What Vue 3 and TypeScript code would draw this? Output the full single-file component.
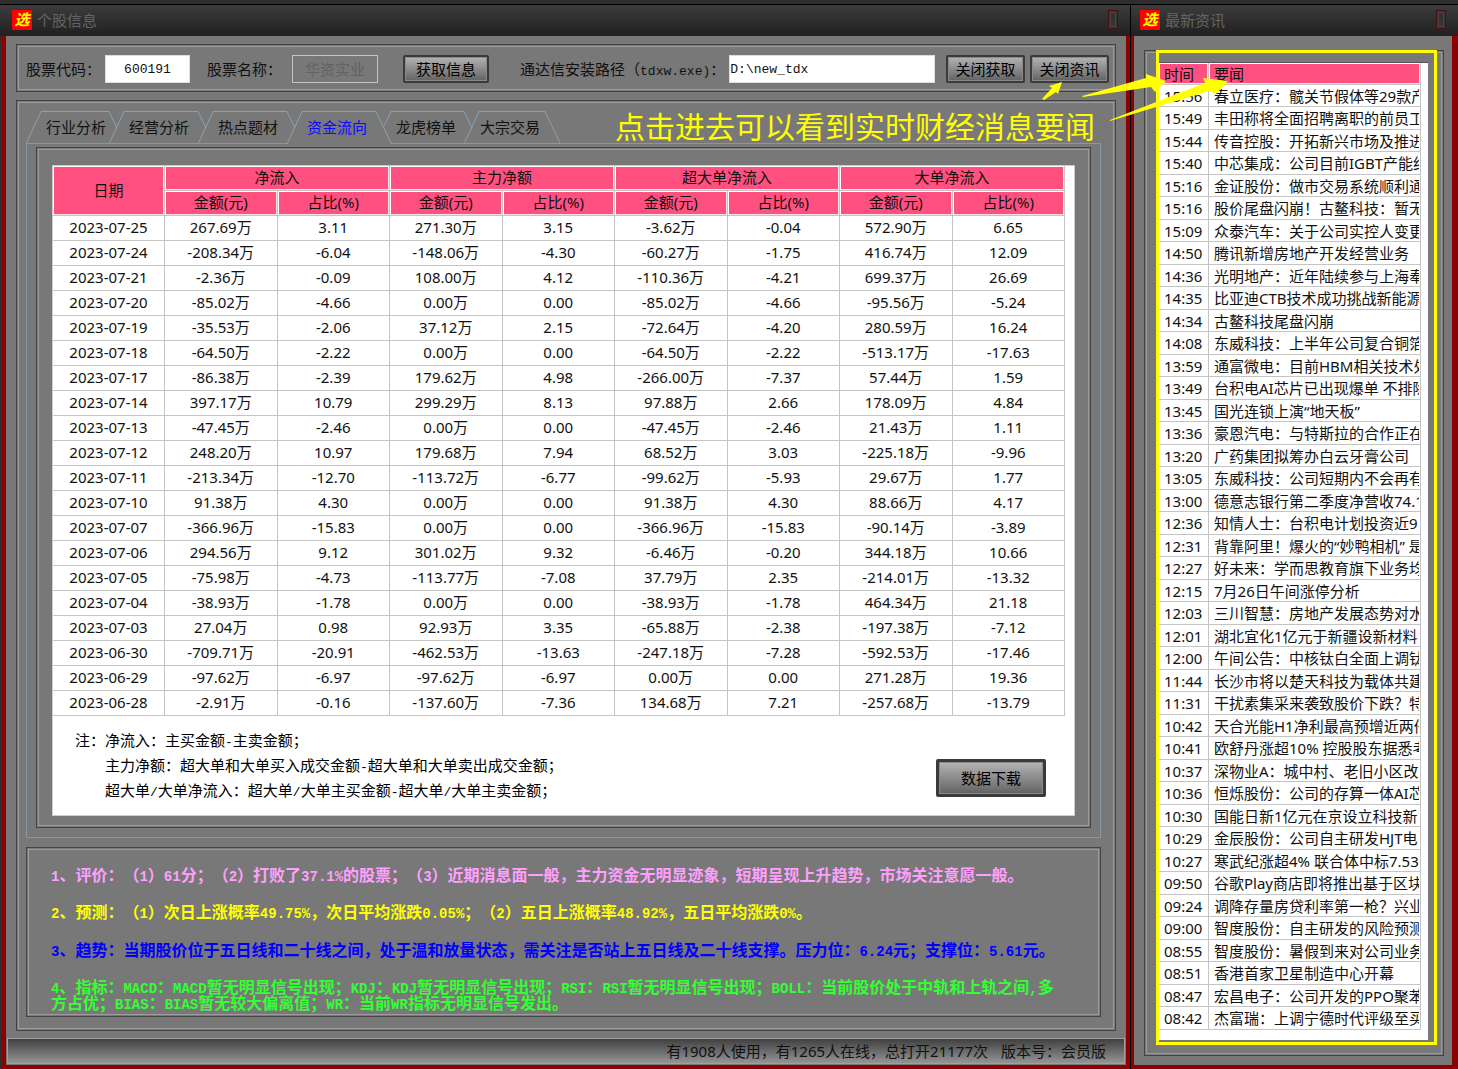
<script setup lang="ts">
import { ref } from 'vue'

interface Tab {
  label: string
  width: number
}

interface Comment {
  tone: string
  text: string
}

const tabs: Tab[] = [
  { label: '行业分析', width: 83 },
  { label: '经营分析', width: 89 },
  { label: '热点题材', width: 89 },
  { label: '资金流向', width: 89 },
  { label: '龙虎榜单', width: 88 },
  { label: '大宗交易', width: 81 },
]
const active = ref(3)
const code = ref('600191')
const stockName = ref('华资实业')
const path = ref('D:\\new_tdx')

// Outline of one slanted tab; neighbours of the selected tab are cut where it covers them.
function tabShape(i: number): string {
  const w = tabs[i].width
  const open = i === active.value || i === tabs.length - 1
  const start = i === active.value + 1 ? 'M8 15 L15 0.5' : 'M0.5 32 L15 0.5'
  return `${start} H${w} L${open ? w + 15 : w + 8} ${open ? 32 : 17}`
}

const groups = ['净流入', '主力净额', '超大单净流入', '大单净流入']

const flows: string[][] = `
2023-07-25 267.69万 3.11 271.30万 3.15 -3.62万 -0.04 572.90万 6.65
2023-07-24 -208.34万 -6.04 -148.06万 -4.30 -60.27万 -1.75 416.74万 12.09
2023-07-21 -2.36万 -0.09 108.00万 4.12 -110.36万 -4.21 699.37万 26.69
2023-07-20 -85.02万 -4.66 0.00万 0.00 -85.02万 -4.66 -95.56万 -5.24
2023-07-19 -35.53万 -2.06 37.12万 2.15 -72.64万 -4.20 280.59万 16.24
2023-07-18 -64.50万 -2.22 0.00万 0.00 -64.50万 -2.22 -513.17万 -17.63
2023-07-17 -86.38万 -2.39 179.62万 4.98 -266.00万 -7.37 57.44万 1.59
2023-07-14 397.17万 10.79 299.29万 8.13 97.88万 2.66 178.09万 4.84
2023-07-13 -47.45万 -2.46 0.00万 0.00 -47.45万 -2.46 21.43万 1.11
2023-07-12 248.20万 10.97 179.68万 7.94 68.52万 3.03 -225.18万 -9.96
2023-07-11 -213.34万 -12.70 -113.72万 -6.77 -99.62万 -5.93 29.67万 1.77
2023-07-10 91.38万 4.30 0.00万 0.00 91.38万 4.30 88.66万 4.17
2023-07-07 -366.96万 -15.83 0.00万 0.00 -366.96万 -15.83 -90.14万 -3.89
2023-07-06 294.56万 9.12 301.02万 9.32 -6.46万 -0.20 344.18万 10.66
2023-07-05 -75.98万 -4.73 -113.77万 -7.08 37.79万 2.35 -214.01万 -13.32
2023-07-04 -38.93万 -1.78 0.00万 0.00 -38.93万 -1.78 464.34万 21.18
2023-07-03 27.04万 0.98 92.93万 3.35 -65.88万 -2.38 -197.38万 -7.12
2023-06-30 -709.71万 -20.91 -462.53万 -13.63 -247.18万 -7.28 -592.53万 -17.46
2023-06-29 -97.62万 -6.97 -97.62万 -6.97 0.00万 0.00 271.28万 19.36
2023-06-28 -2.91万 -0.16 -137.60万 -7.36 134.68万 7.21 -257.68万 -13.79
`.trim().split('\n').map((line) => line.split(' '))

const notes = [
  '净流入：主买金额-主卖金额；',
  '主力净额：超大单和大单买入成交金额-超大单和大单卖出成交金额；',
  '超大单/大单净流入：超大单/大单主买金额-超大单/大单主卖金额；',
]

const comments: Comment[] = [
  { tone: 'pink', text: '1、评价：（1）61分；（2）打败了37.1%的股票；（3）近期消息面一般，主力资金无明显迹象，短期呈现上升趋势，市场关注意愿一般。' },
  { tone: 'yellow', text: '2、预测：（1）次日上涨概率49.75%，次日平均涨跌0.05%；（2）五日上涨概率48.92%，五日平均涨跌0%。' },
  { tone: 'blue', text: '3、趋势：当期股价位于五日线和二十线之间，处于温和放量状态，需关注是否站上五日线及二十线支撑。压力位：6.24元；支撑位：5.61元。' },
  { tone: 'green', text: '4、指标：MACD：MACD暂无明显信号出现；KDJ：KDJ暂无明显信号出现；RSI：RSI暂无明显信号出现；BOLL：当前股价处于中轨和上轨之间,多\n方占优；BIAS：BIAS暂无较大偏离值；WR：当前WR指标无明显信号发出。' },
]

// Splits a line into runs so that half-width characters get their own size.
function runs(text: string): { latin: boolean; s: string }[] {
  return (text.match(/[!-~]+|[^!-~]+/g) ?? []).map((s) => ({ latin: /^[!-~]/.test(s), s }))
}

const news: string[][] = `
15:56|春立医疗：髋关节假体等29款产品
15:49|丰田称将全面招聘离职的前员工
15:44|传音控股：开拓新兴市场及推进
15:40|中芯集成：公司目前IGBT产能约
15:16|金证股份：做市交易系统顺利通
15:16|股价尾盘闪崩！古鳌科技：暂无
15:09|众泰汽车：关于公司实控人变更
14:50|腾讯新增房地产开发经营业务
14:36|光明地产：近年陆续参与上海奉
14:35|比亚迪CTB技术成功挑战新能源
14:34|古鳌科技尾盘闪崩
14:08|东威科技：上半年公司复合铜箔
13:59|通富微电：目前HBM相关技术处
13:49|台积电AI芯片已出现爆单 不排除
13:45|国光连锁上演“地天板”
13:36|豪恩汽电：与特斯拉的合作正在
13:20|广药集团拟筹办白云牙膏公司
13:05|东威科技：公司短期内不会再有
13:00|德意志银行第二季度净营收74.1
12:36|知情人士：台积电计划投资近9
12:31|背靠阿里！爆火的“妙鸭相机” 是
12:27|好未来：学而思教育旗下业务均
12:15|7月26日午间涨停分析
12:03|三川智慧：房地产发展态势对水
12:01|湖北宜化1亿元于新疆设新材料
12:00|午间公告：中核钛白全面上调钛
11:44|长沙市将以楚天科技为载体共建
11:31|干扰素集采来袭致股价下跌？特
10:42|天合光能H1净利最高预增近两倍
10:41|欧舒丹涨超10% 控股股东据悉考
10:37|深物业A：城中村、老旧小区改
10:36|恒烁股份：公司的存算一体AI芯
10:30|国能日新1亿元在京设立科技新
10:29|金辰股份：公司自主研发HJT电
10:27|寒武纪涨超4% 联合体中标7.53
09:50|谷歌Play商店即将推出基于区块
09:24|调降存量房贷利率第一枪？兴业
09:00|智度股份：自主研发的风险预测
08:55|智度股份：暑假到来对公司业务
08:51|香港首家卫星制造中心开幕
08:47|宏昌电子：公司开发的PPO聚苯
08:42|杰富瑞：上调宁德时代评级至买
`.trim().split('\n').map((line) => line.split('|'))
</script>

<template>
  <div class="desk">
    <section class="window main">
      <header class="title">
        <span class="logo">选</span>
        <h1>个股信息</h1>
        <button class="close" type="button" aria-label="关闭">
          <svg width="10" height="19" viewBox="0 0 10 19"><rect x="0.5" y="0.5" width="9" height="18" fill="#333" stroke="#4a1212" /><rect x="2.5" y="2.5" width="5" height="14" fill="none" stroke="#4c4242" /></svg>
        </button>
      </header>
      <div class="body">
        <form class="groove toolbar" @submit.prevent>
          <label for="code">股票代码：</label>
          <input id="code" v-model="code" class="code" type="text" />
          <label for="name" class="name-label">股票名称：</label>
          <input id="name" v-model="stockName" class="name" type="text" disabled />
          <button class="btn fetch" type="button">获取信息</button>
          <label for="path" class="path-label">通达信安装路径（<span class="latin">tdxw.exe)</span>：</label>
          <input id="path" v-model="path" class="path" type="text" />
          <button class="btn" type="button">关闭获取</button>
          <button class="btn last" type="button">关闭资讯</button>
        </form>

        <div class="groove content">
          <nav class="tabs" role="tablist">
            <button
              v-for="(tab, i) in tabs"
              :key="tab.label"
              class="tab"
              :class="{ active: i === active }"
              type="button"
              role="tab"
              :aria-selected="i === active"
              :style="{ width: tab.width + 'px' }"
              @click="active = i"
            >
              <svg class="shape" :width="tab.width + 16" height="33"><path :d="tabShape(i)" fill="none" stroke="#8aa2b0" /></svg>
              <span>{{ tab.label }}</span>
            </button>
          </nav>
          <div class="page">
            <div class="groove frame">
              <div class="sheet">
                <table class="flows">
                  <colgroup>
                    <col class="date-col" />
                    <col v-for="n in 8" :key="n" />
                  </colgroup>
                  <thead>
                    <tr>
                      <th rowspan="2" scope="col">日期</th>
                      <th v-for="g in groups" :key="g" colspan="2" scope="colgroup">{{ g }}</th>
                    </tr>
                    <tr>
                      <template v-for="g in groups" :key="g">
                        <th scope="col">金额(元)</th>
                        <th scope="col">占比(%)</th>
                      </template>
                    </tr>
                  </thead>
                  <tbody>
                    <tr v-for="row in flows" :key="row[0]">
                      <td v-for="(cell, c) in row" :key="c">{{ cell }}</td>
                    </tr>
                  </tbody>
                </table>
                <div class="foot">
                  <div class="notes">
                    <span>注：</span>
                    <div>
                      <p v-for="note in notes" :key="note"><span v-for="(r, k) in runs(note)" :key="k" :class="{ latin: r.latin }">{{ r.s }}</span></p>
                    </div>
                  </div>
                  <button class="btn download" type="button">数据下载</button>
                </div>
              </div>
            </div>
          </div>
          <div class="groove comments">
            <p v-for="c in comments" :key="c.tone" :class="c.tone"><span v-for="(r, k) in runs(c.text)" :key="k" :class="{ latin: r.latin }">{{ r.s }}</span></p>
          </div>
        </div>
        <footer class="status">
          <span>有1908人使用，有1265人在线，总打开21177次</span>
          <span>版本号：会员版</span>
        </footer>
      </div>
    </section>

    <section class="window side">
      <header class="title">
        <span class="logo">选</span>
        <h1>最新资讯</h1>
        <button class="close" type="button" aria-label="关闭">
          <svg width="10" height="19" viewBox="0 0 10 19"><rect x="0.5" y="0.5" width="9" height="18" fill="#333" stroke="#4a1212" /><rect x="2.5" y="2.5" width="5" height="14" fill="none" stroke="#4c4242" /></svg>
        </button>
      </header>
      <div class="body">
        <div class="groove feed">
          <div class="paper">
            <table class="news">
              <colgroup>
                <col class="time-col" />
                <col />
              </colgroup>
              <thead>
                <tr>
                  <th scope="col">时间</th>
                  <th scope="col">要闻</th>
                </tr>
              </thead>
              <tbody>
                <tr v-for="(n, i) in news" :key="i">
                  <td>{{ n[0] }}</td>
                  <td><div class="headline">{{ n[1] }}</div></td>
                </tr>
              </tbody>
            </table>
          </div>
          <div class="highlight"></div>
        </div>
      </div>
    </section>

    <div class="callout">点击进去可以看到实时财经消息要闻</div>
    <svg class="arrows" width="190" height="44" viewBox="0 0 190 44" fill="#ff0">
      <path d="M2 19 L12 8 L9 6 L22 2 L18 14 L16 12 L4 20 Z" />
      <path d="M42 16 L106 -2 L106 -6 L126 1 L115 12 L111 7 L43 17 Z" />
      <path d="M70 40 L165 3 L163 -2 L188 1 L176 14 L169 11 L70 41 Z" />
    </svg>
  </div>
</template>

<style>
html,
body {
  background: #2b2b2b;
}
</style>

<style scoped>
* {
  box-sizing: border-box;
}

.desk {
  position: relative;
  display: flex;
  min-height: 100vh;
  padding-top: 4px;
  background: #2e2e2e;
  color: #111;
  font: 15px/20px "Noto Sans", "Noto Sans CJK SC", sans-serif;
  text-spacing-trim: space-all;
}

h1,
p {
  margin: 0;
}

button,
input {
  margin: 0;
  padding: 0;
  font: inherit;
  color: inherit;
}

.window {
  display: flex;
  flex-direction: column;
  border-top: 1px solid #000;
}

.main {
  flex: 1;
  min-width: 0;
  border-right: 1px solid #000;
}

.side {
  flex: none;
  width: 327px;
}

.title {
  display: flex;
  align-items: center;
  height: 31px;
  padding: 0 12px 2px;
  background: linear-gradient(#3c3c3c, #202020);
}

.side .title {
  padding-left: 9px;
}

.logo {
  width: 20px;
  height: 20px;
  background: #f00;
  color: #ff0;
  font-size: 15px;
  font-weight: 700;
  font-style: italic;
  line-height: 19px;
  text-align: center;
}

.title h1 {
  flex: 1;
  margin-left: 5px;
  color: #646464;
  font-size: 15px;
  font-weight: 400;
}

.close {
  width: 10px;
  height: 19px;
  border: 0;
  background: none;
}

.close svg {
  display: block;
}

.body {
  flex: 1;
  display: flex;
  flex-direction: column;
  border: 4px solid #8c0000;
  border-top: 0;
  background: #787878;
}

.main .body {
  margin-left: 2px;
  padding: 8px 10px 1px;
}

.side .body {
  margin-right: 1px;
  border-left-width: 3px;
  border-right-width: 5px;
  padding: 14px 8px 9px 10px;
}

.groove {
  border: 1px solid #444;
  box-shadow: inset 0 0 0 1px #787878, inset 0 0 0 2px #9c9c9c;
}

.latin {
  font-family: "Liberation Mono", monospace;
  font-size: 13px;
  line-height: 1px;
}

.toolbar {
  display: flex;
  align-items: center;
  height: 48px;
  padding: 2px 6px 0 9px;
  white-space: nowrap;
}

.toolbar input {
  height: 28px;
  border: 1px solid #ddd;
  border-radius: 0;
  background: #fff;
  font: 13px "Liberation Mono", "Noto Sans CJK SC", monospace;
}

.toolbar .code {
  width: 85px;
  margin-left: 4px;
  text-align: center;
}

.name-label {
  margin-left: 17px;
}

.toolbar .name {
  width: 86px;
  margin-left: 10px;
  border-color: #c4c4c4;
  background: #787878;
  color: #626262;
  font-size: 15px;
  text-align: center;
}

.btn {
  flex: none;
  width: 79px;
  height: 28px;
  border: 2px solid #3a3a3a;
  border-radius: 2px;
  background: linear-gradient(#b4b4b4, #626262);
  box-shadow: inset 0 0 0 1px #8a8a8a;
  color: #000;
  line-height: 22px;
  white-space: nowrap;
}

.fetch {
  width: 86px;
  margin-left: 25px;
}

.path-label {
  margin-left: 31px;
}

.toolbar .path {
  flex: 1;
  min-width: 0;
  margin: 0 11px 0 4px;
}

.last {
  margin-left: 5px;
}

.content {
  flex: 1;
  display: flex;
  flex-direction: column;
  margin-top: 8px;
  padding: 10px 14px 13px 9px;
}

.tabs {
  display: flex;
  height: 32px;
}

.tab {
  position: relative;
  flex: none;
  border: 0;
  padding-left: 20px;
  background: none;
  color: #111;
  text-align: left;
  white-space: nowrap;
}

.tab.active {
  color: #0a0aff;
  z-index: 1;
}

.tab.active::after {
  content: "";
  position: absolute;
  left: 1px;
  right: -14px;
  bottom: -1px;
  height: 1px;
  background: #787878;
}

.tab:last-child {
  padding-left: 16px;
}

.shape {
  position: absolute;
  left: 0;
  top: 0;
}

.page {
  border: 1px solid #8299a6;
  padding: 3px 9px 9px;
}

.frame {
  padding: 17px 15px 11px;
}

.sheet {
  border: 1px solid #ccc;
  background: #fff;
  padding-bottom: 12px;
}

table {
  border-collapse: separate;
  border-spacing: 0;
  table-layout: fixed;
}

th {
  padding: 0;
  border-right: 1px solid #c4c4c4;
  border-bottom: 1px solid #c4c4c4;
  background: #ff5080;
  box-shadow: inset 1px 1px #fff, inset -1px -1px #f4e4e8;
  font-weight: 400;
}

td {
  padding: 0;
  border-right: 1px solid #c4c4c4;
  border-bottom: 1px solid #c4c4c4;
}

.flows {
  width: calc(100% - 9px);
  text-align: center;
}

.date-col {
  width: 112px;
}

.flows tr {
  height: 25px;
}

.flows th,
.flows td {
  padding-bottom: 2px;
}

.foot {
  display: flex;
  justify-content: space-between;
  margin-top: 12px;
  padding: 0 28px 0 22px;
  color: #000;
  line-height: 25px;
}

.notes {
  display: flex;
}

.download {
  width: 110px;
  height: 38px;
  margin-top: 31px;
  border-width: 3px;
  line-height: 20px;
}

.comments {
  margin-top: 9px;
  padding: 19px 10px 5px 24px;
  font-size: 16px;
  font-weight: 700;
  line-height: 16px;
  white-space: pre;
}

.comments p {
  margin-bottom: 21px;
}

.comments p:nth-child(even) {
  margin-bottom: 22px;
}

.comments p:last-child {
  margin-bottom: 0;
}

.comments .latin {
  font-size: 14px;
}

.pink {
  color: #ffa0ff;
}

.yellow {
  color: #ff0;
}

.blue {
  color: #00f;
}

.green {
  color: #3f3;
}

.status {
  display: flex;
  justify-content: flex-end;
  align-items: center;
  gap: 13px;
  height: 26px;
  margin: 7px -9px 0;
  padding: 0 18px;
  border: 1px solid #a0a0a0;
  background: linear-gradient(#404040, #949494);
}

.feed {
  position: relative;
  flex: 1;
  display: flex;
  padding: 11px 15px 15px 12px;
}

.paper {
  flex: 1;
  min-width: 0;
  border-top: 1px solid #555;
  background: #fff;
  padding: 0 7px 0 2px;
}

.news {
  width: 100%;
  text-align: left;
}

.time-col {
  width: 50px;
}

.news tr {
  height: 22px;
}

.news tbody tr:nth-child(even) {
  height: 23px;
}

.news th,
.news td {
  padding-left: 5px;
  line-height: 20px;
}

.headline {
  height: 20px;
  margin-right: 1px;
  overflow: hidden;
  white-space: pre;
}

.highlight {
  position: absolute;
  left: 11px;
  right: 6px;
  top: -1px;
  bottom: 10px;
  border: 3px solid #ff0;
  pointer-events: none;
}

.callout {
  position: absolute;
  right: 363px;
  top: 107px;
  color: #ff0;
  font-size: 30px;
  line-height: 40px;
  pointer-events: none;
}

.arrows {
  position: absolute;
  right: 228px;
  top: 80px;
  overflow: visible;
  pointer-events: none;
}
</style>
